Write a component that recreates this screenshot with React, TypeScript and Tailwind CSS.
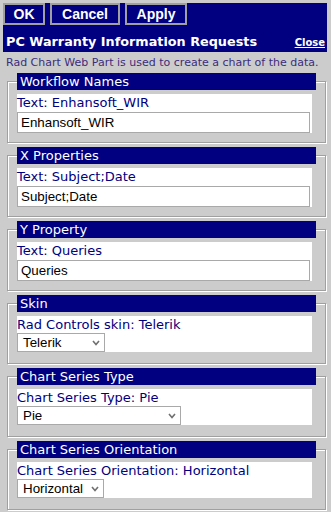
import React from "react";

type SectionProps = {
  title: string;
  label: string;
  compact?: boolean;
  children: React.ReactNode;
};

// fieldset-like box: gray/white groove border, navy legend bar over the top edge
const Section = ({ title, label, compact, children }: SectionProps) => {
  return (
    <div
      className={`ml-[7px] w-[319px] border border-[#a0a0a0] pl-[9px] shadow-[inset_1px_1px_0_#fff,1px_1px_0_#fff] ${
        compact ? "pb-[11px]" : "pb-[9px]"
      }`}
    >
      <div className="-mt-[9px] h-[17px] w-[299px] bg-[#000080] pl-[3px] text-[13px] leading-[17px] text-white">
        {title}
      </div>
      <div className="mt-[4px] w-[295px] bg-white">
        <div
          className={`text-[13px] text-[#000080] ${
            compact ? "h-[17px] leading-[17px]" : "h-[18px] leading-[18px]"
          }`}
        >
          {label}
        </div>
        {children}
      </div>
    </div>
  );
};

const TextBox = ({ value }: { value: string }) => (
  <input
    readOnly
    value={value}
    className="block h-[21px] w-[293px] border border-[#a9a9a9] bg-white px-[3px] font-['Liberation_Sans',Arial,sans-serif] text-[13.33px] text-black outline-none"
  />
);

const Dropdown = ({ value, width }: { value: string; width: string }) => (
  <div
    className={`flex h-[19px] items-center justify-between border border-[#a9a9a9] bg-white pl-[5px] pr-[4px] font-['Liberation_Sans',Arial,sans-serif] text-[13.33px] text-black ${width}`}
  >
    <span>{value}</span>
    <svg width="8" height="6" viewBox="0 0 8 6" aria-hidden="true">
      <polyline points="1,1 4,4.5 7,1" fill="none" stroke="#707070" strokeWidth="1.6" />
    </svg>
  </div>
);

const ToolButton = ({ label, width }: { label: string; width: string }) => (
  <button
    type="button"
    className={`h-[22px] border-2 border-[#a0a0a0] bg-[#000080] font-['Liberation_Sans',Arial,sans-serif] text-[14px] font-bold leading-[18px] text-white ${width}`}
  >
    {label}
  </button>
);

export default function App() {
  return (
    <div className="h-[512px] w-[331px] overflow-hidden bg-[#cccccc] font-['DejaVu_Sans',Verdana,sans-serif]">
      <div className="ml-[3px] pt-[3px]">
        <div className="h-[49px] w-[324px] bg-[#000080]">
          <div className="flex gap-[5px]">
            <ToolButton label="OK" width="w-[42px]" />
            <ToolButton label="Cancel" width="w-[70px]" />
            <ToolButton label="Apply" width="w-[62px]" />
          </div>
          <div className="flex items-baseline justify-between pl-[3px] pr-[2px] pt-[8px]">
            <span className="text-[12.8px] font-bold leading-[17px] text-white">
              PC Warranty Information Requests
            </span>
            <a href="#" className="text-[10px] font-bold text-white underline">
              Close
            </a>
          </div>
        </div>
      </div>
      <p className="pl-[6px] pt-[4px] text-[11px] leading-[14px] text-[#3c2c7c]">
        Rad Chart Web Part is used to create a chart of the data.
      </p>
      <div className="mt-[11px] flex flex-col gap-[12px]">
        <Section title="Workflow Names" label="Text: Enhansoft_WIR">
          <TextBox value="Enhansoft_WIR" />
        </Section>
        <Section title="X Properties" label="Text: Subject;Date">
          <TextBox value="Subject;Date" />
        </Section>
        <Section title="Y Property" label="Text: Queries">
          <TextBox value="Queries" />
        </Section>
        <Section title="Skin" label="Rad Controls skin: Telerik" compact>
          <Dropdown value="Telerik" width="w-[88px]" />
        </Section>
        <Section title="Chart Series Type" label="Chart Series Type: Pie" compact>
          <Dropdown value="Pie" width="w-[164px]" />
        </Section>
        <Section title="Chart Series Orientation" label="Chart Series Orientation: Horizontal" compact>
          <Dropdown value="Horizontal" width="w-[87px]" />
        </Section>
      </div>
    </div>
  );
}
